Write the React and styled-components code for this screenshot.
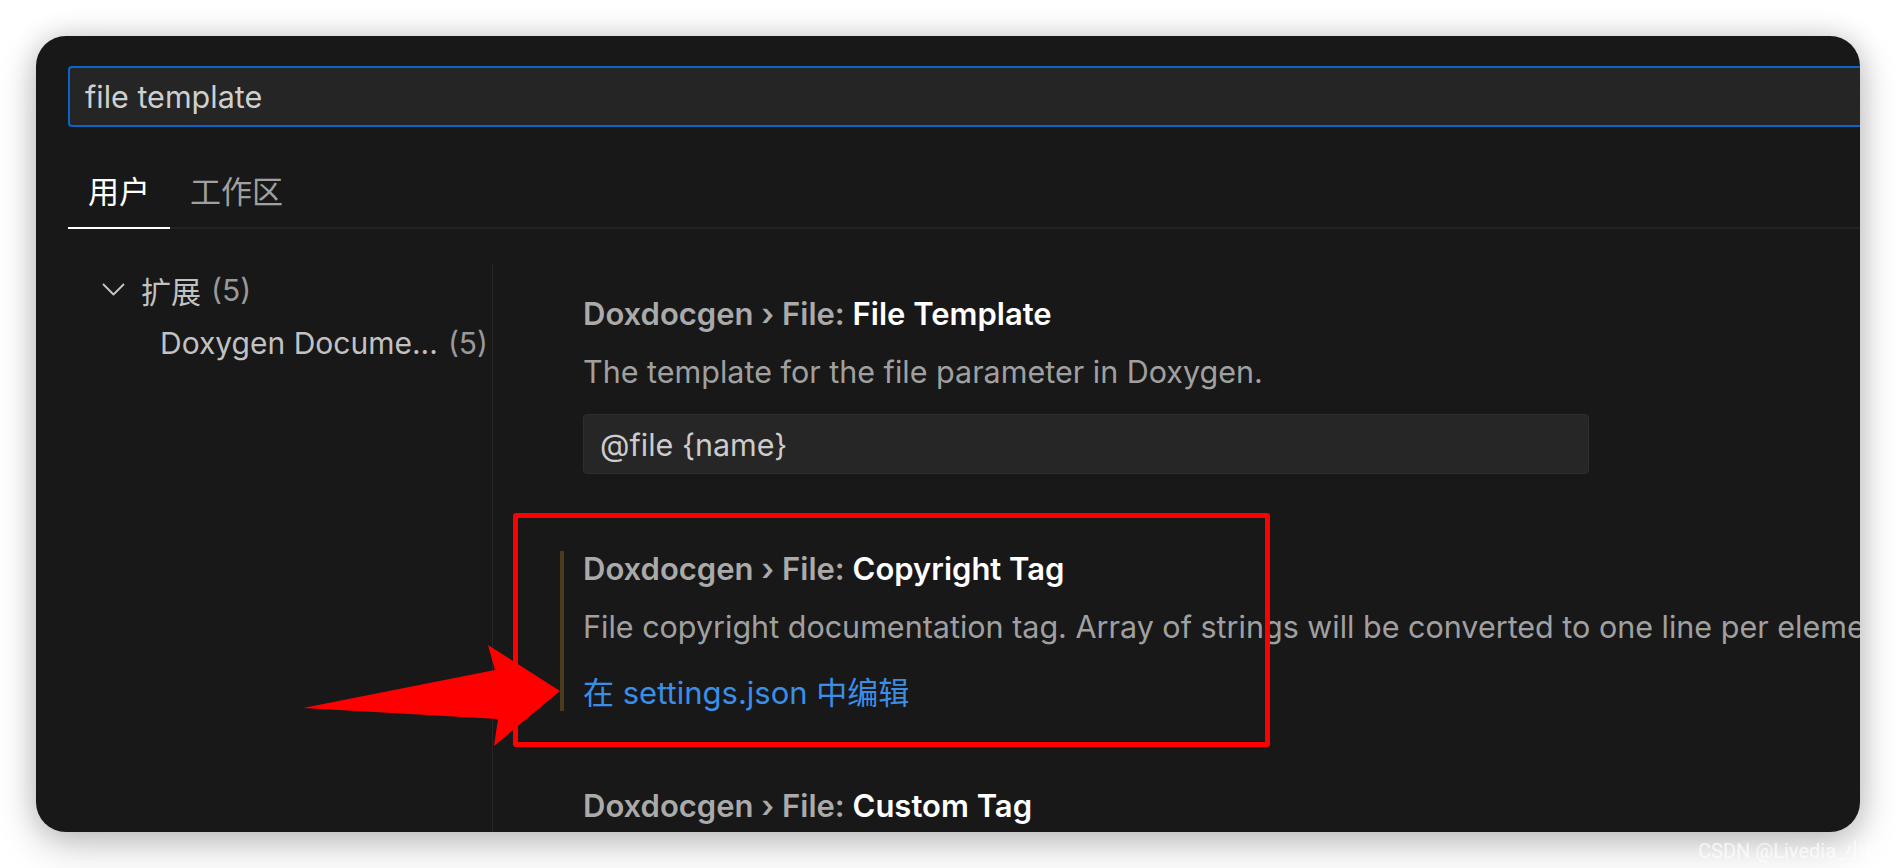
import React from "react";
import styled, { createGlobalStyle } from "styled-components";

const GlobalStyle = createGlobalStyle`
  html, body {
    margin: 0;
    padding: 0;
    background: #ffffff;
  }
  body {
    font-family: Inter, "Noto Sans CJK SC", sans-serif;
    -webkit-font-smoothing: antialiased;
  }
`;

const Page = styled.div`
  position: relative;
  width: 1896px;
  height: 868px;
  padding: 36px;
  box-sizing: border-box;
  overflow: hidden;
  background: #ffffff;
`;

const Window = styled.div`
  width: 1824px;
  height: 796px;
  box-sizing: border-box;
  padding: 30px 0 0 32px;
  background: #181818;
  border-radius: 30px;
  overflow: hidden;
  display: flex;
  flex-direction: column;
  box-shadow: 0 0 28px rgba(0, 0, 0, 0.16), 0 14px 40px rgba(0, 0, 0, 0.2);
`;

const SearchBox = styled.div`
  height: 61px;
  flex: none;
  box-sizing: border-box;
  margin-right: -12px;
  padding-left: 15px;
  display: flex;
  align-items: center;
  background: #252525;
  border: 2px solid #0e63c8;
  border-right: none;
  border-radius: 4px 0 0 4px;
  font-size: 30.5px;
  color: #cfcfcf;
`;

const TabBar = styled.div`
  margin-top: 43px;
  display: flex;
  flex: none;
  border-bottom: 2px solid #232323;
`;

const Tab = styled.div`
  padding: 0 20px 17px;
  margin-bottom: -2px;
  line-height: 40px;
  font-size: 31px;
  font-family: "Noto Sans CJK SC", sans-serif;
  color: ${(p) => (p.$active ? "#ffffff" : "#a0a0a0")};
  border-bottom: 2px solid ${(p) => (p.$active ? "#ffffff" : "transparent")};
`;

const Body = styled.div`
  margin-top: 34px;
  flex: 1;
  min-height: 0;
  display: flex;
`;

const Toc = styled.div`
  width: 424px;
  flex: none;
`;

const TocRow = styled.div`
  height: 53px;
  display: flex;
  align-items: center;
  padding-left: ${(p) => p.$indent}px;
  font-size: 30px;
  color: #c2c2c2;
  white-space: nowrap;
`;

const Chevron = styled.svg`
  width: 23px;
  height: 13px;
  margin-right: 16px;
  flex: none;
`;

const Count = styled.span`
  margin-left: 10px;
  color: #999999;
`;

const Pane = styled.div`
  flex: 1;
  min-width: 0;
  border-left: 1px solid #262626;
  padding: 33px 0 0 90px;
  display: flex;
  flex-direction: column;
  gap: 77px;
  overflow: hidden;
`;

const SettingItem = styled.div`
  margin-left: -23px;
  padding-left: 19px;
  border-left: 4px solid ${(p) => (p.$focused ? "#4b3a1b" : "transparent")};
`;

const Title = styled.div`
  font-size: 31px;
  font-weight: 600;
  line-height: 36px;
  color: #aaaaaa;
  white-space: nowrap;
`;

const Label = styled.span`
  color: #ffffff;
`;

const Description = styled.div`
  margin-top: 22px;
  font-size: 30.5px;
  line-height: 36px;
  color: #a0a0a0;
  white-space: nowrap;
`;

const ValueInput = styled.div`
  margin-top: 24px;
  width: 1006px;
  height: 60px;
  box-sizing: border-box;
  padding-left: 16px;
  display: flex;
  align-items: center;
  background: #262626;
  border: 1px solid #2e2e2e;
  border-radius: 4px;
  font-size: 30.5px;
  color: #cccccc;
`;

const EditLink = styled.div`
  margin-top: 30px;
  font-size: 31px;
  line-height: 36px;
  color: #3b8ee8;
  white-space: nowrap;
`;

const Highlight = styled.div`
  position: absolute;
  left: 513px;
  top: 513px;
  width: 757px;
  height: 234px;
  box-sizing: border-box;
  border: 5px solid #ff0000;
  border-radius: 3px;
  pointer-events: none;
`;

const Pointer = styled.svg`
  position: absolute;
  left: 0;
  top: 0;
  width: 1896px;
  height: 868px;
  pointer-events: none;
`;

const Watermark = styled.div`
  position: absolute;
  left: 1698px;
  top: 835px;
  font-family: Roboto, "Noto Sans CJK SC", sans-serif;
  font-size: 20px;
  color: rgba(255, 255, 255, 0.72);
  white-space: nowrap;
`;

const settings = [
  {
    category: "Doxdocgen › File: ",
    label: "File Template",
    description: "The template for the file parameter in Doxygen.",
    value: "@file {name}",
  },
  {
    category: "Doxdocgen › File: ",
    label: "Copyright Tag",
    description:
      "File copyright documentation tag. Array of strings will be converted to one line per element.",
    link: "在 settings.json 中编辑",
    focused: true,
  },
  {
    category: "Doxdocgen › File: ",
    label: "Custom Tag",
  },
];

export default function App() {
  return (
    <>
      <GlobalStyle />
      <Page>
        <Window>
          <SearchBox>file template</SearchBox>
          <TabBar>
            <Tab $active>用户</Tab>
            <Tab>工作区</Tab>
          </TabBar>
          <Body>
            <Toc>
              <TocRow $indent={34}>
                <Chevron viewBox="0 0 23 13" fill="none">
                  <polyline
                    points="1,1 11.5,11.5 22,1"
                    stroke="#c5c5c5"
                    strokeWidth="1.8"
                    strokeLinejoin="round"
                  />
                </Chevron>
                扩展<Count>(5)</Count>
              </TocRow>
              <TocRow $indent={92}>
                Doxygen Docume...<Count>(5)</Count>
              </TocRow>
            </Toc>
            <Pane>
              {settings.map((s) => (
                <SettingItem key={s.label} $focused={s.focused}>
                  <Title>
                    {s.category}
                    <Label>{s.label}</Label>
                  </Title>
                  {s.description && <Description>{s.description}</Description>}
                  {s.value && <ValueInput>{s.value}</ValueInput>}
                  {s.link && <EditLink>{s.link}</EditLink>}
                </SettingItem>
              ))}
            </Pane>
          </Body>
        </Window>
        <Highlight />
        <Pointer viewBox="0 0 1896 868">
          <polygon
            points="303,708 495,670 488,645 560,691 494,746 498,719"
            fill="#ff0000"
          />
        </Pointer>
        <Watermark>CSDN @Livedia_小饭</Watermark>
      </Page>
    </>
  );
}
